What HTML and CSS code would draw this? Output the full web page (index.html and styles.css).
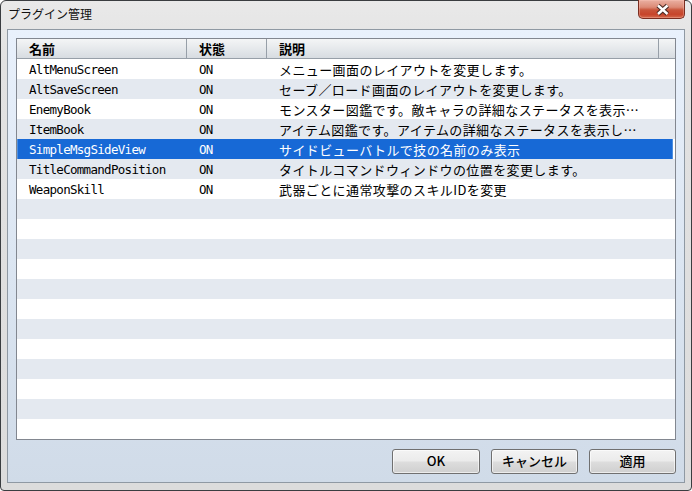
FILE: index.html
```html
<!DOCTYPE html>
<html lang="ja">
<head>
<meta charset="utf-8">
<title>プラグイン管理</title>
<link rel="stylesheet" href="styles.css">
</head>
<body>
<div class="window">
  <div class="titlebar">
    <span class="title">プラグイン管理</span>
    <div class="close">
      <svg width="47" height="19" viewBox="0 0 47 19">
        <path d="M20 5.5 L29.5 14 M29.5 5.5 L20 14" stroke="#4a2a24" stroke-width="4.6" fill="none"/>
        <path d="M20 5.5 L29.5 14 M29.5 5.5 L20 14" stroke="#ffffff" stroke-width="2.4" fill="none"/>
      </svg>
    </div>
  </div>
  <div class="client">
    <div class="list">
      <div class="header">
        <div class="hcell">名前</div>
        <div class="hcell">状態</div>
        <div class="hcell">説明</div>
        <div class="hcell last"></div>
      </div>
      <div class="rows">
        <div class="row"><span class="mono name">AltMenuScreen</span><span class="mono status">ON</span><span class="desc">メニュー画面のレイアウトを変更します。</span></div>
        <div class="row"><span class="mono name">AltSaveScreen</span><span class="mono status">ON</span><span class="desc">セーブ／ロード画面のレイアウトを変更します。</span></div>
        <div class="row"><span class="mono name">EnemyBook</span><span class="mono status">ON</span><span class="desc">モンスター図鑑です。敵キャラの詳細なステータスを表示…</span></div>
        <div class="row"><span class="mono name">ItemBook</span><span class="mono status">ON</span><span class="desc">アイテム図鑑です。アイテムの詳細なステータスを表示し…</span></div>
        <div class="row selected"><span class="mono name">SimpleMsgSideView</span><span class="mono status">ON</span><span class="desc">サイドビューバトルで技の名前のみ表示</span></div>
        <div class="row"><span class="mono name">TitleCommandPosition</span><span class="mono status">ON</span><span class="desc">タイトルコマンドウィンドウの位置を変更します。</span></div>
        <div class="row"><span class="mono name">WeaponSkill</span><span class="mono status">ON</span><span class="desc">武器ごとに通常攻撃のスキルIDを変更</span></div>
        <div class="row"></div>
        <div class="row"></div>
        <div class="row"></div>
        <div class="row"></div>
        <div class="row"></div>
        <div class="row"></div>
        <div class="row"></div>
        <div class="row"></div>
        <div class="row"></div>
        <div class="row"></div>
        <div class="row"></div>
        <div class="row"></div>
      </div>
    </div>
    <div class="buttons">
      <div class="btn">OK</div>
      <div class="btn">キャンセル</div>
      <div class="btn">適用</div>
    </div>
  </div>
</div>
</body>
</html>
```
FILE: styles.css
```css
* { box-sizing: border-box; }
html, body { margin: 0; padding: 0; }
body {
  width: 692px;
  height: 491px;
  background: #ffffff;
  font-family: "Noto Sans CJK JP", "Noto Sans", sans-serif;
  overflow: hidden;
}
.window {
  width: 692px;
  height: 491px;
  border: 1px solid #3a3d40;
  border-radius: 6px 6px 4px 4px;
  background: linear-gradient(#e9e9e9, #e2e2e2 60px, #dcdcdc);
  padding: 0 6px 7px 6px;
  display: flex;
  flex-direction: column;
}
.titlebar {
  height: 28px;
  display: flex;
  align-items: flex-start;
  flex: none;
}
.title {
  padding-left: 1px;
  line-height: 26px;
  font-size: 12px;
  color: #111;
}
.close {
  margin-left: auto;
  margin-top: -1px;
  width: 47px;
  height: 19px;
  border: 1px solid #7a2d20;
  border-top: none;
  border-radius: 0 0 5px 5px;
  background: linear-gradient(#eab0a2 0%, #dc8a76 40%, #c9553b 55%, #c7452b 80%, #d46a4d 100%);
  box-shadow: inset 0 0 0 1px rgba(255, 200, 190, 0.35);
  position: relative;
}
.close svg { position: absolute; left: -1px; top: 0; }
.client {
  flex: 1;
  border: 1px solid #8f99a3;
  background: linear-gradient(#e9f1fc, #dce6f2 50%, #d0dbe8);
  padding: 8px;
  display: flex;
  flex-direction: column;
}
.list {
  height: 402px;
  border: 1px solid #828790;
  background: #ffffff;
  flex: none;
  overflow: hidden;
}
.header {
  display: grid;
  grid-template-columns: 170px 80px 392px 16px;
  height: 20px;
  border-bottom: 1px solid #979fa8;
  background: linear-gradient(#f4f5f6, #e6e9ec 50%, #d7dce1);
}
.hcell {
  border-right: 1px solid #979fa8;
  padding-left: 12px;
  font-size: 13px;
  font-weight: bold;
  line-height: 19px;
  color: #000;
}
.hcell.last { border-right: none; }
.row {
  display: grid;
  grid-template-columns: 170px 80px 408px;
  height: 20px;
  line-height: 20px;
  padding-top: 1px;
  color: #000;
  white-space: nowrap;
  overflow: hidden;
}
.row:nth-child(even) { background: #e4e9f0; }
.row.selected {
  background: #1769d6;
  color: #ffffff;
  box-shadow: inset 1px 0 0 #4d8fe0, inset -2px 0 0 #ffffff, inset -3px 0 0 #4d8fe0;
}
.mono {
  font-family: "DejaVu Sans Mono", monospace;
  font-size: 12.5px;
  letter-spacing: -0.7px;
  padding-left: 12px;
}
.desc {
  font-family: "Noto Sans CJK JP", sans-serif;
  font-size: 13px;
  letter-spacing: 0.4px;
  padding-left: 12px;
  overflow: hidden;
}
.buttons {
  margin-top: 9px;
  display: flex;
  justify-content: flex-end;
  gap: 11px;
}
.btn {
  width: 87px;
  height: 25px;
  border: 1px solid #707070;
  border-radius: 3px;
  background: linear-gradient(#f3f3f3, #ebebeb 48%, #dddddd 52%, #cfcfcf);
  box-shadow: inset 0 0 0 1px rgba(255, 255, 255, 0.6);
  font-size: 13px;
  font-weight: 500;
  line-height: 22px;
  text-align: center;
  color: #000;
}
.btn:first-child { width: 88px; }
```
